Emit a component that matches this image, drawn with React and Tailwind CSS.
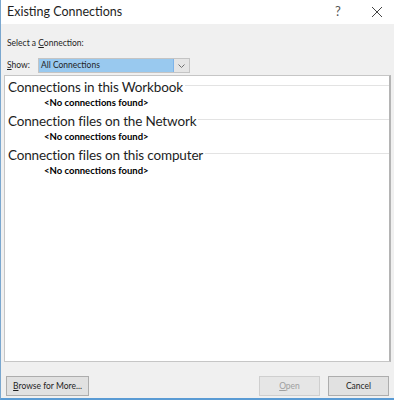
import React from 'react';

const font = { fontFamily: 'Lato, "Open Sans", sans-serif' };

const Section = ({ title }) => (
  <div>
    <div className="flex items-center h-[18px]">
      <span className="text-[13.5px] leading-[18px] text-[#1e1e1e] whitespace-nowrap tracking-[-0.15px]">{title}</span>
      <div className="flex-1 h-px bg-[#e3e3e3] ml-0.5 -mt-1" />
    </div>
    <div className="pl-[36px] text-[9.5px] leading-[14px] font-bold text-black whitespace-nowrap">&lt;No connections found&gt;</div>
  </div>
);

const Btn = ({ children, disabled }) => (
  <button
    className={
      'w-full h-[20px] border text-[8.5px] leading-[18px] whitespace-nowrap ' +
      (disabled
        ? 'border-[#cfcfcf] bg-[#e6e6e6] text-[#a0a0a0]'
        : 'border-[#adadad] bg-[#e1e1e1] text-[#1e1e1e]')
    }
  >
    {children}
  </button>
);

export default function App() {
  return (
    <div className="w-[394px] h-[400px] bg-[#f0f0f0] flex flex-col border-l border-[#7aa7cf] border-b-2 border-b-[#5a9bd4]" style={font}>
      <div className="h-[24px] bg-white flex items-center pl-[6px] text-[12.5px] text-[#1e1e1e]">
        <span className="flex-1 whitespace-nowrap">Existing Connections</span>
        <span className="w-[14px] text-center text-[13px] text-[#555] mr-[26px]">?</span>
        <svg width="12" height="12" viewBox="0 0 12 12" className="mr-[11px]">
          <path d="M1 1L11 11M11 1L1 11" stroke="#444" strokeWidth="1" />
        </svg>
      </div>
      <div className="flex-1 flex flex-col px-[3px]">
        <div className="pl-[3px] pt-[13px] text-[8.5px] leading-[12px] text-[#1e1e1e] whitespace-nowrap">
          Select a <u>C</u>onnection:
        </div>
        <div className="flex items-center mt-[9px] pl-[3px] h-[15px]">
          <span className="w-[31px] text-[8.5px] text-[#1e1e1e]"><u>S</u>how:</span>
          <div className="w-[152px] h-[15px] flex border border-[#c4c4c4] bg-[#e5e5e5]">
            <div className="flex-1 bg-[#99c9ef] text-[8.5px] leading-[13px] pl-[2px] text-[#1e1e1e] border-r border-[#7eb4ea] whitespace-nowrap">All Connections</div>
            <div className="w-[15px] flex items-center justify-center">
              <svg width="7" height="4" viewBox="0 0 7 4">
                <path d="M0.5 0.5L3.5 3.5L6.5 0.5" stroke="#707070" fill="none" strokeWidth="1" />
              </svg>
            </div>
          </div>
        </div>
        <div className="mt-[2px] h-[287px] bg-white border border-[#c6c6c6] border-r-2 border-r-[#b4b4b4] pl-[3px] pt-[2px] flex flex-col gap-[2px]">
          <Section title="Connections in this Workbook" />
          <Section title="Connection files on the Network" />
          <Section title="Connection files on this computer" />
        </div>
        <div className="flex items-center mt-[9px] px-[2px]">
          <div className="w-[83px]"><Btn><u>B</u>rowse for More...</Btn></div>
          <div className="flex-1" />
          <div className="w-[61px]"><Btn disabled><u>O</u>pen</Btn></div>
          <div className="w-[61px] ml-[8px]"><Btn>Cancel</Btn></div>
        </div>
      </div>
    </div>
  );
}
